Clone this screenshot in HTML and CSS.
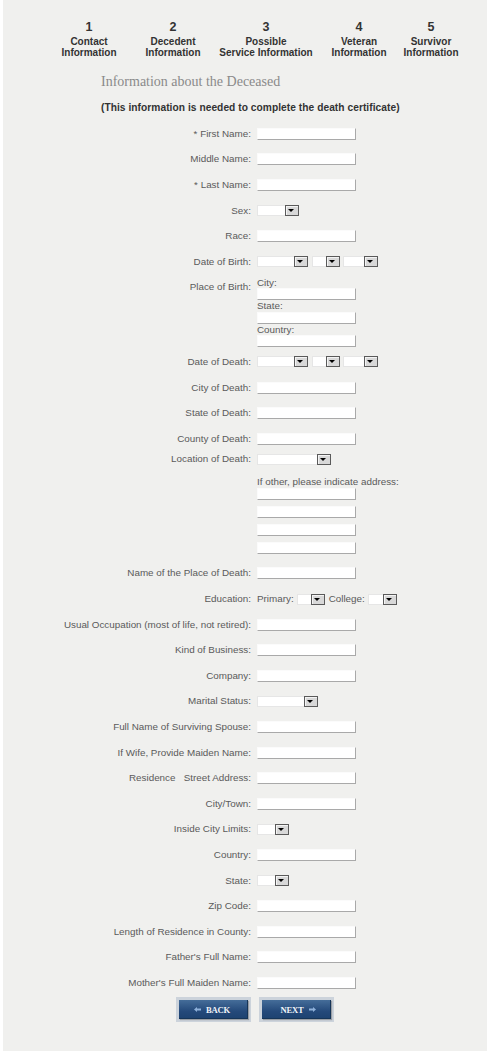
FILE: index.html
```html
<!DOCTYPE html>
<html lang="en">
<head>
<meta charset="utf-8">
<title>Decedent Information</title>
<link rel="stylesheet" href="styles.css">
</head>
<body>
<div class="page">
  <div class="steps">
    <div class="step"><div class="num">1</div><div class="lbl">Contact<br>Information</div></div>
    <div class="step"><div class="num">2</div><div class="lbl">Decedent<br>Information</div></div>
    <div class="step step-wide"><div class="num">3</div><div class="lbl">Possible<br>Service Information</div></div>
    <div class="step"><div class="num">4</div><div class="lbl">Veteran<br>Information</div></div>
    <div class="step step-narrow"><div class="num">5</div><div class="lbl">Survivor<br>Information</div></div>
  </div>

  <h1 class="title">Information about the Deceased</h1>
  <p class="note">(This information is needed to complete the death certificate)</p>

  <div class="form">
    <div class="row"><label class="lab">* First Name:</label><div class="field"><input class="txt" type="text"></div></div>
    <div class="row"><label class="lab">Middle Name:</label><div class="field"><input class="txt" type="text"></div></div>
    <div class="row"><label class="lab">* Last Name:</label><div class="field"><input class="txt" type="text"></div></div>
    <div class="row"><label class="lab">Sex:</label><div class="field"><span class="sel w-sex"><select></select></span></div></div>
    <div class="row"><label class="lab">Race:</label><div class="field"><input class="txt" type="text"></div></div>
    <div class="row"><label class="lab">Date of Birth:</label><div class="field dates"><span class="sel w-month"><select></select></span><span class="sel w-day"><select></select></span><span class="sel w-year"><select></select></span></div></div>

    <div class="row block-pob"><label class="lab lab-top">Place of Birth:</label>
      <div class="field stack">
        <span class="sub">City:</span><input class="txt" type="text">
        <span class="sub">State:</span><input class="txt" type="text">
        <span class="sub">Country:</span><input class="txt" type="text">
      </div>
    </div>

    <div class="row"><label class="lab">Date of Death:</label><div class="field dates"><span class="sel w-month"><select></select></span><span class="sel w-day"><select></select></span><span class="sel w-year"><select></select></span></div></div>
    <div class="row"><label class="lab">City of Death:</label><div class="field"><input class="txt" type="text"></div></div>
    <div class="row"><label class="lab">State of Death:</label><div class="field"><input class="txt" type="text"></div></div>
    <div class="row"><label class="lab">County of Death:</label><div class="field"><input class="txt" type="text"></div></div>
    <div class="row row-short"><label class="lab">Location of Death:</label><div class="field"><span class="sel w-loc"><select></select></span></div></div>

    <div class="row block-other"><span class="lab"></span>
      <div class="field other">
        <span class="sub sub-other">If other, please indicate address:</span>
        <input class="txt" type="text">
        <input class="txt" type="text">
        <input class="txt" type="text">
        <input class="txt" type="text">
      </div>
    </div>

    <div class="row"><label class="lab">Name of the Place of Death:</label><div class="field"><input class="txt" type="text"></div></div>
    <div class="row"><label class="lab">Education:</label><div class="field edu"><span class="inl">Primary:</span><span class="sel w-edu1"><select></select></span><span class="inl inl-college">College:</span><span class="sel w-edu2"><select></select></span></div></div>
    <div class="row"><label class="lab">Usual Occupation (most of life, not retired):</label><div class="field"><input class="txt" type="text"></div></div>
    <div class="row"><label class="lab">Kind of Business:</label><div class="field"><input class="txt" type="text"></div></div>
    <div class="row"><label class="lab">Company:</label><div class="field"><input class="txt" type="text"></div></div>
    <div class="row"><label class="lab">Marital Status:</label><div class="field"><span class="sel w-marital"><select></select></span></div></div>
    <div class="row"><label class="lab">Full Name of Surviving Spouse:</label><div class="field"><input class="txt" type="text"></div></div>
    <div class="row"><label class="lab">If Wife, Provide Maiden Name:</label><div class="field"><input class="txt" type="text"></div></div>
    <div class="row"><label class="lab">Residence &nbsp; Street Address:</label><div class="field"><input class="txt" type="text"></div></div>
    <div class="row"><label class="lab">City/Town:</label><div class="field"><input class="txt" type="text"></div></div>
    <div class="row"><label class="lab">Inside City Limits:</label><div class="field"><span class="sel w-small"><select></select></span></div></div>
    <div class="row"><label class="lab">Country:</label><div class="field"><input class="txt" type="text"></div></div>
    <div class="row"><label class="lab">State:</label><div class="field"><span class="sel w-small"><select></select></span></div></div>
    <div class="row"><label class="lab">Zip Code:</label><div class="field"><input class="txt" type="text"></div></div>
    <div class="row"><label class="lab">Length of Residence in County:</label><div class="field"><input class="txt" type="text"></div></div>
    <div class="row"><label class="lab">Father's Full Name:</label><div class="field"><input class="txt" type="text"></div></div>
    <div class="row"><label class="lab">Mother's Full Maiden Name:</label><div class="field"><input class="txt" type="text"></div></div>
  </div>

  <div class="actions">
    <div class="btn-wrap"><button class="btn" type="button"><svg class="arr" width="7" height="5" viewBox="0 0 7 5"><polygon points="0,2.5 3,0 3,1.5 7,1.5 7,3.5 3,3.5 3,5"/></svg>BACK</button></div>
    <div class="btn-wrap"><button class="btn btn-next" type="button">NEXT<svg class="arr" width="7" height="5" viewBox="0 0 7 5"><polygon points="7,2.5 4,0 4,1.5 0,1.5 0,3.5 4,3.5 4,5"/></svg></button></div>
  </div>
</div>
</body>
</html>
```

FILE: styles.css
```css
body {
  margin: 0;
  background: #ffffff;
  font-family: "Liberation Sans", Arial, sans-serif;
}

.page {
  margin-left: 3px;
  height: 1051px;
  box-sizing: border-box;
  padding-top: 20px;
  background: #f0f0ee;
  overflow: hidden;
}

/* steps */
.steps {
  display: flex;
  padding-left: 44px;
  color: #333;
  font-weight: bold;
  text-align: center;
}
.step { width: 84px; }
.step-wide { width: 102px; }
.step-narrow { width: 60px; }
.num {
  font-size: 12.5px;
  line-height: 14px;
  margin-bottom: 2px;
}
.lbl {
  font-size: 10px;
  line-height: 11px;
}

.title {
  margin: 16px 0 0;
  padding-left: 98px;
  font-family: "Liberation Serif", "Times New Roman", serif;
  font-weight: normal;
  font-size: 14px;
  line-height: 16px;
  color: #8a8a8a;
}

.note {
  margin: 12px 0 0;
  padding-left: 98px;
  font-size: 10.2px;
  line-height: 12px;
  font-weight: bold;
  color: #333;
  letter-spacing: 0.05px;
}

/* form */
.form {
  margin-top: 7px;
  font-size: 9.85px;
  color: #5a5a5a;
}
.row {
  display: grid;
  grid-template-columns: 248px 1fr;
  column-gap: 6px;
  align-items: center;
  height: 25.6px;
}
.row-short { height: 15px; }
.lab {
  text-align: right;
  line-height: 12px;
  white-space: nowrap;
}
.field {
  display: flex;
  align-items: center;
  line-height: 12px;
}

.txt {
  display: block;
  width: 99px;
  height: 12px;
  box-sizing: border-box;
  margin: 0;
  padding: 0;
  border: 1px solid;
  border-color: #fbfbfb #a9a9a9 #a9a9a9 #fbfbfb;
  background: #fff;
}

/* place of birth block */
.block-pob {
  height: auto;
  align-items: start;
  padding: 2px 0 2.1px;
}
.lab-top { padding-top: 4.4px; }
.stack {
  flex-direction: column;
  align-items: flex-start;
}
.sub {
  display: block;
  line-height: 11.5px;
  white-space: nowrap;
}

/* other address block */
.block-other {
  height: auto;
  align-items: start;
  padding: 9.9px 0 6.7px;
}
.other {
  flex-direction: column;
  align-items: flex-start;
  gap: 6px;
}
.sub-other {
  line-height: 12px;
  margin-bottom: -6.5px;
}

/* selects */
.sel {
  position: relative;
  display: inline-block;
  height: 11px;
  box-sizing: border-box;
  background: #fff;
  border: 1px solid #e6e6e6;
}
.sel select {
  display: block;
  width: 100%;
  height: 100%;
  margin: 0;
  padding: 0;
  border: 0;
  background: transparent;
  -webkit-appearance: none;
  appearance: none;
}
.sel::before {
  content: "";
  position: absolute;
  top: -1px;
  right: -1px;
  bottom: -1px;
  width: 14px;
  box-sizing: border-box;
  border: 1px solid #5a5a5a;
  background: #d8d8d8;
  box-shadow: inset 1px 1px 0 #f4f4f4;
}
.sel::after {
  content: "";
  position: absolute;
  top: 3px;
  right: 4px;
  border-left: 3px solid transparent;
  border-right: 3px solid transparent;
  border-top: 3px solid #000;
}
.w-sex { width: 42px; }
.w-month { width: 51px; }
.w-day { width: 28px; margin-left: 4px; }
.w-year { width: 35px; margin-left: 3px; }
.w-loc { width: 74px; }
.w-edu1 { width: 28px; margin-left: 3px; }
.w-edu2 { width: 29px; margin-left: 3px; }
.w-marital { width: 61px; }
.w-small { width: 32px; }

.inl { white-space: nowrap; }
.inl-college { margin-left: 4px; }

/* buttons */
.actions {
  display: flex;
  gap: 8px;
  padding-left: 173px;
  margin-top: 1.6px;
}
.btn-wrap {
  padding: 3px 3px 2.7px;
  background: #ccd3db;
}
.btn {
  display: flex;
  align-items: center;
  justify-content: center;
  gap: 5px;
  width: 69px;
  height: 19px;
  margin: 0;
  padding: 0 3px 0 0;
  border: 0;
  background: linear-gradient(#456d99, #24497a 60%, #1d4270);
  box-shadow: inset -1px -1px 0 #163558, 1px 1px 1px rgba(0,0,0,0.25);
  color: #f2f5f9;
  font-family: "Liberation Serif", "Times New Roman", serif;
  font-weight: bold;
  font-size: 8.6px;
  letter-spacing: -0.2px;
}
.btn-next {
  padding: 0 0 0 3px;
}
.arr { fill: #8fb1da; display: block; }
```
